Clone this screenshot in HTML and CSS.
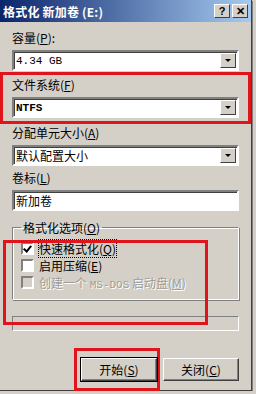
FILE: index.html
```html
<!DOCTYPE html>
<html lang="zh">
  <head>
    <meta charset="UTF-8" />
    <title>格式化 新加卷 (E:)</title>
    <link rel="stylesheet" href="styles.css">
  </head>
  <body>
    <div class="window">
      <div class="titlebar">
        <span class="title">格式化 新加卷 (E:)</span>
        <div class="tbtns">
          <span class="tbtn">?</span>
          <span class="tbtn">&#x2715;</span>
        </div>
      </div>

      <div class="content">
        <div class="field">
          <div class="label">容量(<u>P</u>):</div>
          <div class="combo"><span class="mono">4.34 GB</span><span class="arrow"></span></div>
        </div>

        <div class="field marked">
          <div class="label">文件系统(<u>F</u>)</div>
          <div class="combo"><span class="mono bold">NTFS</span><span class="arrow"></span></div>
        </div>

        <div class="field">
          <div class="label">分配单元大小(<u>A</u>)</div>
          <div class="combo"><span>默认配置大小</span><span class="arrow"></span></div>
        </div>

        <div class="field">
          <div class="label">卷标(<u>L</u>)</div>
          <div class="textbox">新加卷</div>
        </div>

        <fieldset class="group">
          <legend>格式化选项(<u>O</u>)</legend>
          <div class="check"><span class="box checked"></span><span class="focus">快速格式化(<u>Q</u>)</span></div>
          <div class="check"><span class="box"></span><span>启用压缩(<u>E</u>)</span></div>
          <div class="check disabled"><span class="box"></span><span>创建一个 <span class="mono">MS-DOS</span> 启动盘(<u>M</u>)</span></div>
        </fieldset>
        <div class="mark2"></div>

        <div class="progress"></div>

        <div class="buttons">
          <div class="mark3"><button class="btn">开始(<u>S</u>)</button></div>
          <button class="btn">关闭(<u>C</u>)</button>
        </div>
      </div>
    </div>
  </body>
</html>
```

FILE: styles.css
```css
html, body {
  margin: 0;
  padding: 0;
  background: #d4d0c8;
}
body {
  font-family: "SimSun", "Noto Sans CJK SC", sans-serif;
  font-size: 12px;
  color: #000;
}
.window {
  width: 251px;
  height: 390px;
  background: #d4d0c8;
  border-right: 1px solid #404040;
  border-bottom: 1px solid #404040;
  box-shadow: 1px 1px 0 #808080;
  position: relative;
}
.titlebar {
  height: 22px;
  background: linear-gradient(to right, #0a246a, #a6caf0);
  display: flex;
  align-items: center;
  justify-content: space-between;
  padding: 0 3px 0 3px;
}
.title {
  color: #fff;
  font-weight: bold;
  font-size: 12px;
  letter-spacing: 0.2px;
}
.tbtns {
  display: flex;
  gap: 2px;
}
.tbtn {
  width: 14px;
  height: 12px;
  background: #d4d0c8;
  border: 1px solid;
  border-color: #fff #404040 #404040 #fff;
  font-family: "Liberation Sans", sans-serif;
  font-weight: bold;
  font-size: 11px;
  line-height: 12px;
  text-align: center;
}
.content {
  padding: 8px 12px 0 12px;
  position: relative;
}
.field {
  margin-bottom: 4px;
}
.label {
  height: 16px;
  line-height: 16px;
  margin-bottom: 4px;
}
u {
  text-decoration: underline;
  text-underline-offset: 1px;
}
.combo, .textbox {
  height: 17px;
  background: #fff;
  border: 2px solid;
  border-color: #808080 #fff #fff #808080;
  box-shadow: inset 1px 1px 0 #404040;
  display: flex;
  align-items: center;
  justify-content: space-between;
  padding-left: 2px;
}
.mono {
  font-family: "Liberation Mono", monospace;
  font-size: 11px;
}
.bold {
  font-weight: bold;
}
.arrow {
  width: 14px;
  height: 13px;
  margin-right: 1px;
  background: #d4d0c8;
  border: 1px solid;
  border-color: #fff #404040 #404040 #fff;
  position: relative;
}
.arrow::after {
  content: "";
  position: absolute;
  left: 4px;
  top: 5px;
  border-left: 3px solid transparent;
  border-right: 3px solid transparent;
  border-top: 3px solid #000;
}
.marked {
  outline: 3px solid #e0141b;
  outline-offset: 0;
  margin: 0 -9px 4px -9px;
  padding: 2px 9px 3px 9px;
}
.group {
  margin: 8px 0 0 0;
  padding: 4px 8px 8px 8px;
  border: 1px solid;
  border-color: #808080 #fff #fff #808080;
  box-shadow: inset 1px 1px 0 #fff, 1px 1px 0 #808080;
}
.group legend {
  padding: 0 2px;
}
.check {
  display: flex;
  align-items: center;
  gap: 5px;
  height: 17px;
}
.box {
  width: 9px;
  height: 9px;
  background: #fff;
  border: 2px solid;
  border-color: #808080 #fff #fff #808080;
  position: relative;
}
.box.checked::after {
  content: "";
  position: absolute;
  left: 2px;
  top: 0;
  width: 3px;
  height: 6px;
  border: solid #000;
  border-width: 0 2px 2px 0;
  transform: rotate(40deg);
}
.focus {
  outline: 1px dotted #000;
}
.disabled {
  color: #a09c94;
  text-shadow: 1px 1px 0 #fff;
}
.disabled .box {
  background: #d4d0c8;
}
.mark2 {
  position: absolute;
  left: 3px;
  top: 218px;
  width: 199px;
  height: 79px;
  border: 3px solid #e0141b;
}
.progress {
  margin-top: 16px;
  height: 13px;
  border: 1px solid;
  border-color: #808080 #fff #fff #808080;
}
.buttons {
  margin-top: 27px;
  display: flex;
  justify-content: flex-end;
  gap: 3px;
}
.mark3 {
  border: 3px solid #e0141b;
  padding: 7px 0 7px 4px;
  margin: -10px 0 0 0;
}
.btn {
  width: 76px;
  height: 23px;
  background: #d4d0c8;
  font-family: inherit;
  font-size: 12px;
  border: 1px solid;
  border-color: #fff #404040 #404040 #fff;
  box-shadow: inset -1px -1px 0 #808080;
  padding: 0;
}
.mark3 .btn {
  outline: 1px solid #000;
  outline-offset: 0;
}
```
